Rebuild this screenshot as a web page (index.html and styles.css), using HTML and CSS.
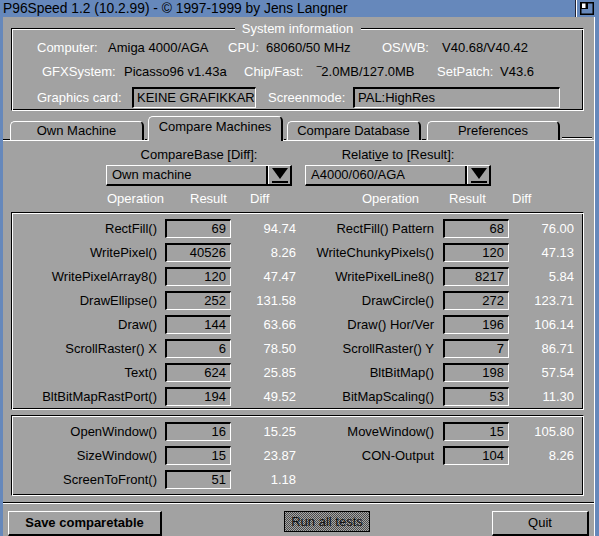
FILE: index.html
```html
<!DOCTYPE html>
<html>
<head>
<meta charset="utf-8">
<title>P96Speed</title>
<link rel="stylesheet" href="styles.css">
</head>
<body>
<div class="win">
  <div class="titlebar">
    <span class="title">P96Speed 1.2 (10.2.99) - © 1997-1999 by Jens Langner</span>
    <span class="depth">
      <svg width="14" height="13" viewBox="0 0 14 13">
        <rect x="0.75" y="0.75" width="12.5" height="11.5" fill="none" stroke="#000" stroke-width="1.5"/>
        <rect x="1" y="1" width="7" height="6" fill="#000"/>
        <rect x="2" y="1.5" width="3.5" height="4.5" fill="#fff"/>
      </svg>
    </span>
  </div>
  <div class="body">
    <div class="group sysinfo">
      <span class="legend">System information</span>
      <div class="inforow r1">
        <span class="lab">Computer:</span><span>Amiga 4000/AGA</span>
        <span class="lab">CPU:</span><span>68060/50 MHz</span>
        <span class="lab">OS/WB:</span><span>V40.68/V40.42</span>
      </div>
      <div class="inforow r2">
        <span class="lab">GFXSystem:</span><span>Picasso96 v1.43a</span>
        <span class="lab">Chip/Fast:</span><span>‾2.0MB/127.0MB</span>
        <span class="lab">SetPatch:</span><span>V43.6</span>
      </div>
      <div class="inforow r3">
        <span class="lab">Graphics card:</span><span class="field f1">KEINE GRAFIKKAR</span>
        <span class="lab">Screenmode:</span><span class="field f2">PAL:HighRes</span>
      </div>
    </div>

    <div class="tabs">
      <span class="tabstub"></span>
      <span class="tab t1">Own Machine</span>
      <span class="tabgap"></span>
      <span class="tab active t2">Compare Machines</span>
      <span class="tabgap"></span>
      <span class="tab t3">Compare Database</span>
      <span class="tabgap wide"></span>
      <span class="tab t4">Preferences</span>
      <span class="tabend"></span>
    </div>

    <div class="panel">
      <div class="selectors">
        <div class="sel">
          <span class="sellab">CompareBase [Diff]:</span>
          <div class="dropdown"><span class="ddtext">Own machine</span><span class="ddbtn"><svg width="16" height="15" viewBox="0 0 16 15"><polygon points="0,0 16,0 8,11" fill="#000"/><rect x="0" y="13" width="16" height="2" fill="#000"/></svg></span></div>
        </div>
        <div class="sel">
          <span class="sellab">Relati<u>v</u>e to [Result]:</span>
          <div class="dropdown"><span class="ddtext">A4000/060/AGA</span><span class="ddbtn"><svg width="16" height="15" viewBox="0 0 16 15"><polygon points="0,0 16,0 8,11" fill="#000"/><rect x="0" y="13" width="16" height="2" fill="#000"/></svg></span></div>
        </div>
      </div>

      <div class="colhead">
        <span>Operation</span><span>Result</span><span>Diff</span>
        <span>Operation</span><span>Result</span><span>Diff</span>
      </div>

      <div class="group results big">
        <span class="op">RectFill()</span><span class="num">69</span><span class="diff">94.74</span>
        <span class="op op2">RectFill() Pattern</span><span class="num">68</span><span class="diff">76.00</span>

        <span class="op">WritePixel()</span><span class="num">40526</span><span class="diff">8.26</span>
        <span class="op op2">WriteChunkyPixels()</span><span class="num">120</span><span class="diff">47.13</span>

        <span class="op">WritePixelArray8()</span><span class="num">120</span><span class="diff">47.47</span>
        <span class="op op2">WritePixelLine8()</span><span class="num">8217</span><span class="diff">5.84</span>

        <span class="op">DrawEllipse()</span><span class="num">252</span><span class="diff">131.58</span>
        <span class="op op2">DrawCircle()</span><span class="num">272</span><span class="diff">123.71</span>

        <span class="op">Draw()</span><span class="num">144</span><span class="diff">63.66</span>
        <span class="op op2">Draw() Hor/Ver</span><span class="num">196</span><span class="diff">106.14</span>

        <span class="op">ScrollRaster() X</span><span class="num">6</span><span class="diff">78.50</span>
        <span class="op op2">ScrollRaster() Y</span><span class="num">7</span><span class="diff">86.71</span>

        <span class="op">Text()</span><span class="num">624</span><span class="diff">25.85</span>
        <span class="op op2">BltBitMap()</span><span class="num">198</span><span class="diff">57.54</span>

        <span class="op">BltBitMapRastPort()</span><span class="num">194</span><span class="diff">49.52</span>
        <span class="op op2">BitMapScaling()</span><span class="num">53</span><span class="diff">11.30</span>
      </div>

      <div class="group results small">
        <span class="op">OpenWindow()</span><span class="num">16</span><span class="diff">15.25</span>
        <span class="op op2">MoveWindow()</span><span class="num">15</span><span class="diff">105.80</span>

        <span class="op">SizeWindow()</span><span class="num">15</span><span class="diff">23.87</span>
        <span class="op op2">CON-Output</span><span class="num">104</span><span class="diff">8.26</span>

        <span class="op">ScreenToFront()</span><span class="num">51</span><span class="diff">1.18</span>
      </div>
    </div>

    <div class="sep"></div>

    <div class="buttons">
      <span class="btn save">Save comparetable</span>
      <span class="btn run">Run all tests</span>
      <span class="btn quit">Quit</span>
    </div>
  </div>
</div>
</body>
</html>
```

FILE: styles.css
```css
* {
  box-sizing: border-box;
  margin: 0;
  padding: 0;
}

body {
  margin: 0;
  background: #a2a2a2;
  font-family: "Liberation Sans", Arial, sans-serif;
  font-size: 13px;
  color: #000;
}

.win {
  width: 599px;
  height: 536px;
  background: #6688bb;
  display: flex;
  flex-direction: column;
  overflow: hidden;
}

/* title bar */
.titlebar {
  height: 17px;
  display: flex;
  align-items: center;
  flex: none;
}

.title {
  padding-left: 3px;
  font-size: 13.8px;
  line-height: 17px;
  white-space: nowrap;
}

.depth {
  margin-left: auto;
  width: 24px;
  height: 17px;
  border-left: 1px solid #223;
  box-shadow: inset 1px 0 0 #fff;
  display: flex;
  align-items: center;
  padding-left: 4px;
}

/* window body */
.body {
  flex: 1;
  margin: 0 4px 0 3px;
  background: #a2a2a2;
  border-right: 1px solid #fff;
  border-bottom: 2px solid #000;
  display: flex;
  flex-direction: column;
}

/* group frame */
.group {
  border: 1px solid;
  border-color: #000 #fff #fff #000;
  box-shadow: inset 1px 1px 0 #fff, inset -1px -1px 0 #000;
}

.sysinfo {
  position: relative;
  margin: 11px 0 0 8px;
  width: 573px;
  height: 83px;
  padding-top: 11px;
}

.legend {
  position: absolute;
  top: -8px;
  left: 0;
  right: 0;
  margin: 0 auto;
  width: 126px;
  background: #a2a2a2;
  color: #fff;
  text-align: center;
  line-height: 16px;
}

.inforow {
  display: grid;
  align-items: center;
  height: 16px;
  line-height: 16px;
  white-space: nowrap;
}

.lab {
  color: #fff;
}

.r1 {
  padding-left: 25px;
  grid-template-columns: 71px 120px 38px 116px 60px auto;
}

.r2 {
  margin-top: 8px;
  padding-left: 30px;
  grid-template-columns: 82px 120px 73px 120px 63px auto;
}

.r3 {
  margin-top: 7px;
  height: 21px;
  padding-left: 25px;
  grid-template-columns: 95px 136px 85px auto;
}

.field {
  height: 21px;
  border-style: solid;
  border-width: 2px 1px 1px 2px;
  border-color: #000 #fff #fff #000;
  padding-left: 3px;
  line-height: 17px;
  overflow: hidden;
}

.f1 {
  width: 124px;
}

.f2 {
  width: 207px;
}

/* tabs */
.tabs {
  display: flex;
  align-items: flex-end;
  height: 25px;
  margin-top: 5px;
  flex: none;
  background: linear-gradient(#fff, #fff) left bottom / 100% 1px no-repeat;
}

.tabstub {
  width: 7px;
  height: 3px;
  margin-bottom: 1px;
  border-bottom: 1px solid #000;
}

.tab {
  height: 19px;
  margin-bottom: 1px;
  border-top: 1px solid #fff;
  border-left: 1px solid #fff;
  border-right: 2px solid #000;
  border-radius: 5px 5px 0 0;
  text-align: center;
  line-height: 17px;
  white-space: nowrap;
}

.tab.active {
  height: 25px;
  margin-bottom: 0;
  line-height: 20px;
  background: #a2a2a2;
}

.t1 { width: 134px; }
.t2 { width: 135px; }
.t3 { width: 134px; }
.t4 { width: 133px; }

.tabgap {
  width: 4px;
  height: 3px;
  margin-bottom: 1px;
  border-bottom: 1px solid #000;
  clip-path: inset(0 1px 0 1px);
}

.tabgap.wide {
  width: 6px;
}

.tabend {
  flex: none;
  width: 30px;
  margin-left: 2px;
  height: 2px;
  margin-bottom: 2px;
  border-top: 1px solid #000;
  border-bottom: 1px solid #fff;
}

/* main panel */
.panel {
  flex: none;
  height: 358px;
  display: flex;
  flex-direction: column;
}

.selectors {
  display: grid;
  grid-template-columns: 186px 186px;
  column-gap: 13px;
  margin: 6px 0 0 103px;
}

.sel {
  display: flex;
  flex-direction: column;
  align-items: center;
}

.sellab {
  line-height: 16px;
  white-space: nowrap;
}

.dropdown {
  margin-top: 2px;
  width: 186px;
  height: 21px;
  display: flex;
  border-style: solid;
  border-width: 1px 2px 2px 1px;
  border-color: #fff #000 #000 #fff;
}

.ddtext {
  flex: 1;
  padding-left: 5px;
  line-height: 18px;
}

.ddbtn {
  width: 24px;
  border-left: 2px solid #000;
  box-shadow: inset 1px 0 0 #fff;
  display: flex;
  align-items: center;
  justify-content: center;
  padding-left: 1px;
}

.colhead {
  display: grid;
  grid-template-columns: 83px 60px 112px 87px 63px auto;
  margin: 5px 0 0 104px;
  color: #fff;
  line-height: 16px;
}

.results {
  margin: 5px 0 0 8px;
  width: 573px;
  padding-top: 3px;
  display: grid;
  grid-template-columns: 153px 66px 65px 147px 66px 65px;
  grid-auto-rows: 24px;
  align-items: center;
  align-content: start;
}

.results.big {
  height: 198px;
}

.results.small {
  height: 81px;
}

.op {
  text-align: right;
  padding-right: 8px;
  white-space: nowrap;
}

.op.op2 {
  padding-right: 9px;
}

.num {
  height: 19px;
  border-style: solid;
  border-width: 2px 1px 1px 2px;
  border-color: #000 #fff #fff #000;
  text-align: right;
  padding-right: 4px;
  line-height: 16px;
}

.diff {
  text-align: right;
  color: #fff;
}

/* bottom */
.sep {
  margin-top: 3px;
  height: 2px;
  border-top: 1px solid #000;
  border-bottom: 1px solid #fff;
  flex: none;
}

.buttons {
  display: flex;
  align-items: flex-start;
  margin-top: 7px;
  padding-left: 5px;
  padding-right: 5px;
  height: 25px;
}

.btn {
  height: 25px;
  border-style: solid;
  border-width: 1px 2px 2px 1px;
  border-color: #fff #000 #000 #fff;
  text-align: center;
  line-height: 22px;
  white-space: nowrap;
}

.save {
  width: 154px;
  font-weight: bold;
}

.run {
  width: 86px;
  height: 21px;
  margin-left: 122px;
  border: 1px solid #000;
  line-height: 19px;
  color: #111;
  background-image: repeating-conic-gradient(#4a4a4a 0% 25%, #a6a6a6 0% 50%);
  background-size: 2px 2px;
}

.quit {
  width: 97px;
  margin-left: auto;
}
```
